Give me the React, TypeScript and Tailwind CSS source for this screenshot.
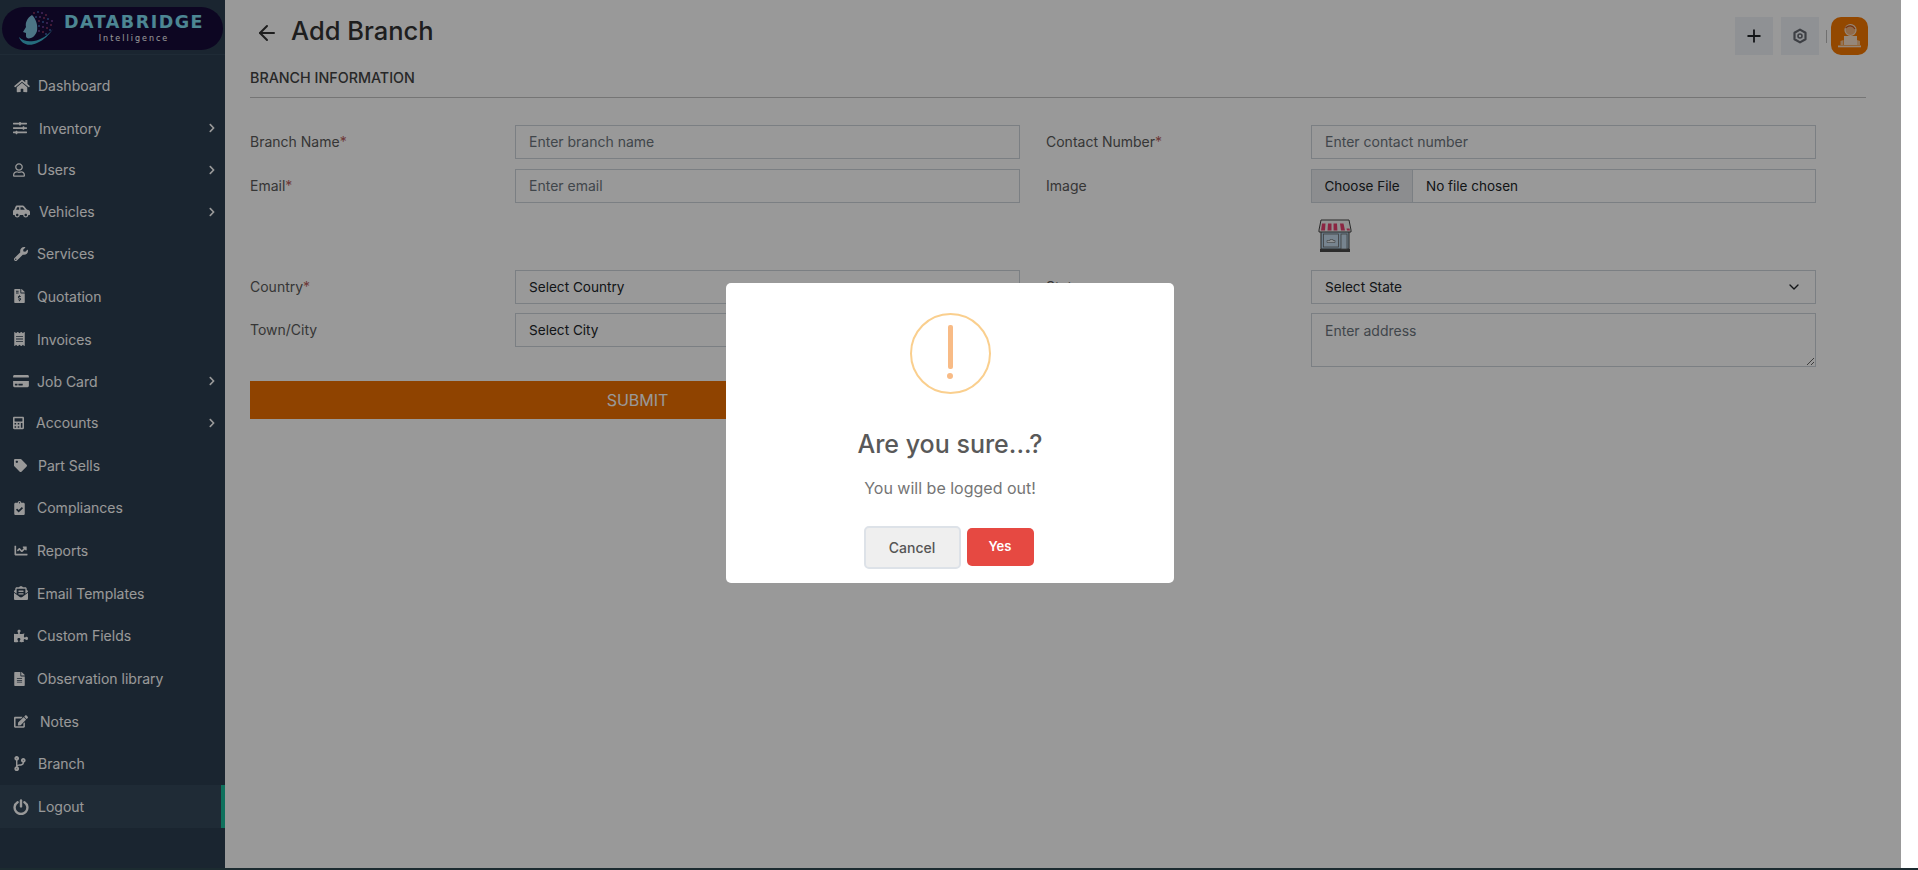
import React from "react";
import {
  FaHome, FaSlidersH, FaRegUser, FaCarSide, FaWrench, FaFileInvoiceDollar, FaReceipt, FaCreditCard,
  FaCalculator, FaTag, FaClipboardCheck, FaChartLine, FaEnvelopeOpenText, FaPuzzlePiece, FaFileAlt,
  FaEdit, FaCodeBranch, FaChevronRight,
} from "react-icons/fa";
import { FiArrowLeft, FiPlus, FiChevronDown } from "react-icons/fi";

const font = "font-['Inter','Liberation_Sans',sans-serif]";

function PowerIcon({ className }: { className?: string }) {
  return (
    <svg viewBox="0 0 16 16" className={className} fill="none" stroke="currentColor" strokeWidth="2.4" strokeLinecap="round">
      <path d="M4.6 3.2a6.4 6.4 0 1 0 6.8 0" />
      <path d="M8 1.4v6" />
    </svg>
  );
}

const items = [
  { label: "Dashboard", Icon: FaHome, cls: "w-[16px] h-[14px] mr-[8px] ml-[14px]" },
  { label: "Inventory", Icon: FaSlidersH, cls: "w-[14px] h-[14px] mr-[12px] ml-[13px]", sub: true },
  { label: "Users", Icon: FaRegUser, cls: "w-[12px] h-[14px] mr-[12px] ml-[13px]", sub: true },
  { label: "Vehicles", Icon: FaCarSide, cls: "w-[17px] h-[15px] mr-[9px] ml-[13px]", sub: true },
  { label: "Services", Icon: FaWrench, cls: "w-[14px] h-[14px] mr-[9px] ml-[14px]" },
  { label: "Quotation", Icon: FaFileInvoiceDollar, cls: "w-[11px] h-[14px] mr-[12px] ml-[14px]" },
  { label: "Invoices", Icon: FaReceipt, cls: "w-[11px] h-[14px] mr-[12px] ml-[14px]" },
  { label: "Job Card", Icon: FaCreditCard, cls: "w-[16px] h-[14px] mr-[8px] ml-[13px]", sub: true },
  { label: "Accounts", Icon: FaCalculator, cls: "w-[11px] h-[14px] mr-[12px] ml-[13px]", sub: true },
  { label: "Part Sells", Icon: FaTag, cls: "w-[13px] h-[13px] mr-[11px] ml-[14px]" },
  { label: "Compliances", Icon: FaClipboardCheck, cls: "w-[11px] h-[14px] mr-[12px] ml-[14px]" },
  { label: "Reports", Icon: FaChartLine, cls: "w-[14px] h-[13px] mr-[9px] ml-[14px]" },
  { label: "Email Templates", Icon: FaEnvelopeOpenText, cls: "w-[14px] h-[14px] mr-[9px] ml-[14px]" },
  { label: "Custom Fields", Icon: FaPuzzlePiece, cls: "w-[14px] h-[14px] mr-[9px] ml-[14px]" },
  { label: "Observation library", Icon: FaFileAlt, cls: "w-[11px] h-[14px] mr-[12px] ml-[14px]" },
  { label: "Notes", Icon: FaEdit, cls: "w-[14px] h-[13px] mr-[12px] ml-[14px]" },
  { label: "Branch", Icon: FaCodeBranch, cls: "w-[12px] h-[15px] mr-[12px] ml-[14px]" },
  { label: "Logout", Icon: PowerIcon, cls: "w-[16px] h-[16px] mr-[9px] ml-[13px]", active: true },
];

function Logo() {
  return (
    <div className="mx-[2px] mt-[7px] flex h-[43px] w-[221px] items-center rounded-full bg-[#160a3a]">
      <svg viewBox="0 0 40 40" className="ml-[15px] h-[40px] w-[40px] shrink-0">
        <path d="M15 6c-5 3-7 8-6 12l-3 5 3 1v3c0 2 2 3 5 2 3-1 5-4 6-7 1-6-1-12-5-16z" fill="#7fc4de" />
        <path d="M2 28c2 7 10 10 18 6 7-3 12-8 16-14-5 6-12 11-19 12-6 1-11 0-15-4z" fill="#3fb4d0" />
        {[[17,4],[21,3],[25,4],[29,6],[19,8],[23,8],[27,9],[31,10],[35,12],[22,12],[26,13],[30,14],[34,16],[22,17],[26,18],[30,19],[33,21],[22,22],[26,23],[29,25]].map(([x, y], i) => (
          <circle key={i} cx={x} cy={y} r="0.8" fill={i % 3 === 0 ? "#e0567a" : i % 3 === 1 ? "#5aa7ff" : "#b46ad8"} />
        ))}
      </svg>
      <div className="ml-[7px] flex flex-col items-center leading-none">
        <span className="font-['DejaVu_Sans',sans-serif] text-[17.5px] leading-[19px] font-bold tracking-[1.5px] text-[#80e0f5]">DATABRIDGE</span>
        <span className="mt-[2px] font-['DejaVu_Sans',sans-serif] text-[8px] leading-[10px] tracking-[2px] text-white">Intelligence</span>
      </div>
    </div>
  );
}

function Sidebar() {
  return (
    <aside className="flex h-full w-[225px] shrink-0 flex-col bg-[#2c3e50]">
      <div className="h-[55px] shrink-0 border-b border-[#34485a]">
        <Logo />
      </div>
      <nav className="mt-[9.65px] flex flex-col">
        {items.map(({ label, Icon, cls, sub, active }) => (
          <div key={label} className={`relative flex items-center text-[14px] text-white ${sub ? "h-[41.7px]" : "h-[42.7px]"} ${active ? "bg-[#34485a]" : ""}`}>
            <Icon className={`shrink-0 ${cls}`} />
            <span>{label}</span>
            {sub && <FaChevronRight className="absolute right-[8px] h-[10px] w-[10px]" />}
            {active && <span className="absolute top-0 right-0 h-full w-[4px] bg-[#1abc9c]" />}
          </div>
        ))}
      </nav>
    </aside>
  );
}

const inputCls = "h-[34px] flex-1 min-w-0 rounded-none border border-[#ced4da] bg-white px-[13px] pb-[2px] text-[14px] text-[#212529] placeholder:text-[#6c757d] outline-none";

function Field({ label, req, children }: { label: string; req?: boolean; children?: React.ReactNode }) {
  return (
    <div className="flex items-start">
      <label className="h-[34px] w-[265px] shrink-0 text-[14px] leading-[33px] text-[#5a5a5a]">
        {label}{req && <span className="text-[#b85e5c]">*</span>}
      </label>
      {children}
    </div>
  );
}

function Select({ text }: { text: string }) {
  return (
    <div className="flex h-[34px] flex-1 items-center justify-between border border-[#ced4da] bg-white pr-[13px] pl-[13px] text-[13.6px] text-[#212529]">
      <span>{text}</span>
      <FiChevronDown className="h-[16px] w-[16px]" />
    </div>
  );
}

function StoreIcon() {
  return (
    <svg viewBox="0 0 34 34" className="h-[34px] w-[34px]">
      <rect x="3" y="12" width="28" height="18" fill="#b4d0e6" stroke="#444" strokeWidth="1" />
      <rect x="2" y="30" width="30" height="3" fill="#4a4a4a" />
      <rect x="5.5" y="15" width="15" height="13" fill="#c6dcee" stroke="#666" strokeWidth="0.8" />
      <rect x="23" y="15" width="6" height="15" fill="#c6dcee" stroke="#666" strokeWidth="0.8" />
      <path d="M9 21.5h3v-1h3v1h2v2H9z" fill="#eef3f7" stroke="#555" strokeWidth="0.5" />
      <path d="M3 1h28l2 10v2H1v-2z" fill="#f3f3f3" stroke="#444" strokeWidth="1" />
      <path d="M4 4.5h3.5L7 11.5H3zM10 4.5h3.5V11.5H9.5zM15.5 4.5H19l.4 7h-3.8zM22 4.5h3.5L27 11.5h-4z" fill="#e83f6f" />
      <path d="M29 11.5h3l-.5-2h-3z" fill="#e83f6f" />
    </svg>
  );
}

function GearIcon() {
  return (
    <svg viewBox="0 0 16 16" className="h-[16px] w-[16px]" fill="none" stroke="#666a72" strokeLinejoin="round">
      <path d="M8 1.6 13.5 4.8v6.4L8 14.4 2.5 11.2V4.8z" strokeWidth="2.2" />
      <circle cx="8" cy="8" r="2" strokeWidth="1.6" />
    </svg>
  );
}

function Avatar() {
  return (
    <svg viewBox="0 0 37 38" className="h-[38px] w-[37px]">
      <circle cx="19.5" cy="13" r="5.5" fill="#f2b27e" stroke="#f8e2cc" strokeWidth="1.2" />
      <path d="M14.5 11c3-3 7-3 9.5 1" fill="none" stroke="#c8561a" strokeWidth="1.2" />
      <path d="M13 19h13v9H13z" fill="#f8e2cc" />
      <path d="M9.5 24l3-1v5h-3zM26 23l3 1v4h-3z" fill="#f8e2cc" fillOpacity="0.7" />
      <rect x="7" y="28.5" width="23" height="1.8" fill="#f8e2cc" />
    </svg>
  );
}

function Main() {
  return (
    <main className="h-full min-w-0 flex-1 bg-white pt-[17px] pr-[35px] pl-[25px]">
      <header className="-mr-[2px] flex h-[38px] items-center justify-between">
        <div className="-mt-[9px] flex items-center">
          <FiArrowLeft className="mt-[2px] ml-[5px] h-[24px] w-[24px] text-[#333]" />
          <h1 className="ml-[12px] text-[25.5px] font-medium text-[#333]">Add Branch</h1>
        </div>
        <div className="flex items-center">
          <button className="flex h-[38px] w-[38px] items-center justify-center bg-[#eff2f7] text-[#212529]"><FiPlus className="h-[20px] w-[20px]" strokeWidth={2.2} /></button>
          <button className="ml-[8px] flex h-[38px] w-[38px] items-center justify-center bg-[#eff2f7]"><GearIcon /></button>
          <span className="mr-[4px] ml-[7px] h-[13px] w-px bg-[#bbb]" />
          <div className="h-[38px] w-[37px] rounded-[10px] bg-[#f57800]"><Avatar /></div>
        </div>
      </header>
      <h2 className="mt-[13px] text-[14.3px] leading-[20px] font-medium text-[#444]">BRANCH INFORMATION</h2>
      <div className="mt-[9px] border-t border-[#c4c4c4]" />
      <form className="mt-[27px] grid w-[1566px] grid-cols-2 gap-x-[26px]">
        <Field label="Branch Name" req><input className={inputCls} placeholder="Enter branch name" /></Field>
        <Field label="Contact Number" req><input className={inputCls} placeholder="Enter contact number" /></Field>
        <div className="mt-[10px]"><Field label="Email" req><input className={inputCls} placeholder="Enter email" /></Field></div>
        <div className="mt-[10px]">
          <Field label="Image">
            <div className="flex h-[34px] flex-1 items-center border border-[#ced4da] bg-white text-[13.5px] text-[#212529]">
              <span className="flex h-full w-[101px] items-center justify-center border-r border-[#ced4da] bg-[#e9ecef]">Choose File</span>
              <span className="ml-[13px]">No file chosen</span>
            </div>
          </Field>
          <div className="mt-[16px] ml-[272px] h-[34px]"><StoreIcon /></div>
        </div>
        <div className="mt-[17px]"><Field label="Country" req><Select text="Select Country" /></Field></div>
        <div className="mt-[17px]"><Field label="State"><Select text="Select State" /></Field></div>
        <div className="mt-[9px]"><Field label="Town/City"><Select text="Select City" /></Field></div>
        <div className="mt-[9px]">
          <Field label="Address">
            <textarea className="h-[54px] min-w-0 flex-1 rounded-none border border-[#ced4da] bg-white px-[13px] py-[6px] text-[14px] outline-none placeholder:text-[#6c757d]" placeholder="Enter address" />
          </Field>
        </div>
        <div className="mt-[14px]">
          <button type="button" className="flex h-[38px] w-[775px] items-center justify-center bg-[#ef7000] text-[16px] text-white">SUBMIT</button>
        </div>
      </form>
    </main>
  );
}

function Modal() {
  return (
    <div className="absolute inset-0 flex items-center justify-center bg-black/40 pr-[1px] pb-[2px]">
      <div className="flex h-[300px] w-[448px] flex-col items-center rounded-[5px] bg-white">
        <div className="relative mt-[29.5px] flex h-[81px] w-[81px] shrink-0 justify-center rounded-full border-2 border-[#facf8e]">
          <span className="absolute top-[10px] h-[44px] w-[5px] rounded-[2px] bg-[#f8bb86]" />
          <span className="absolute top-[58px] h-[6px] w-[6px] rounded-full bg-[#f8bb86]" />
        </div>
        <h3 className="mt-[31px] text-[25px] leading-[38px] font-medium text-[#595959]">Are you sure...?</h3>
        <p className="mt-[14px] text-[16px] leading-[22px] text-[#757575]">You will be logged out!</p>
        <div className="mt-[27px] -ml-[3px] flex items-center gap-[6px]">
          <button className="h-[43px] w-[97px] rounded-[5px] border-2 border-[#dde2e8] bg-[#efefef] text-[14px] font-medium text-[#555]">Cancel</button>
          <button className="h-[38px] w-[67px] rounded-[5px] bg-[#e64942] text-[13px] font-semibold text-white">Yes</button>
        </div>
      </div>
    </div>
  );
}

export default function App() {
  return (
    <div className={`flex h-[870px] w-full flex-col overflow-hidden bg-white ${font}`}>
      <div className="flex h-[868px] w-full">
        <div className="relative flex h-full w-[1901px] shrink-0">
          <Sidebar />
          <Main />
          <Modal />
        </div>
      </div>
      <div className="h-[2px] w-full bg-[#1c2b30]" />
    </div>
  );
}
